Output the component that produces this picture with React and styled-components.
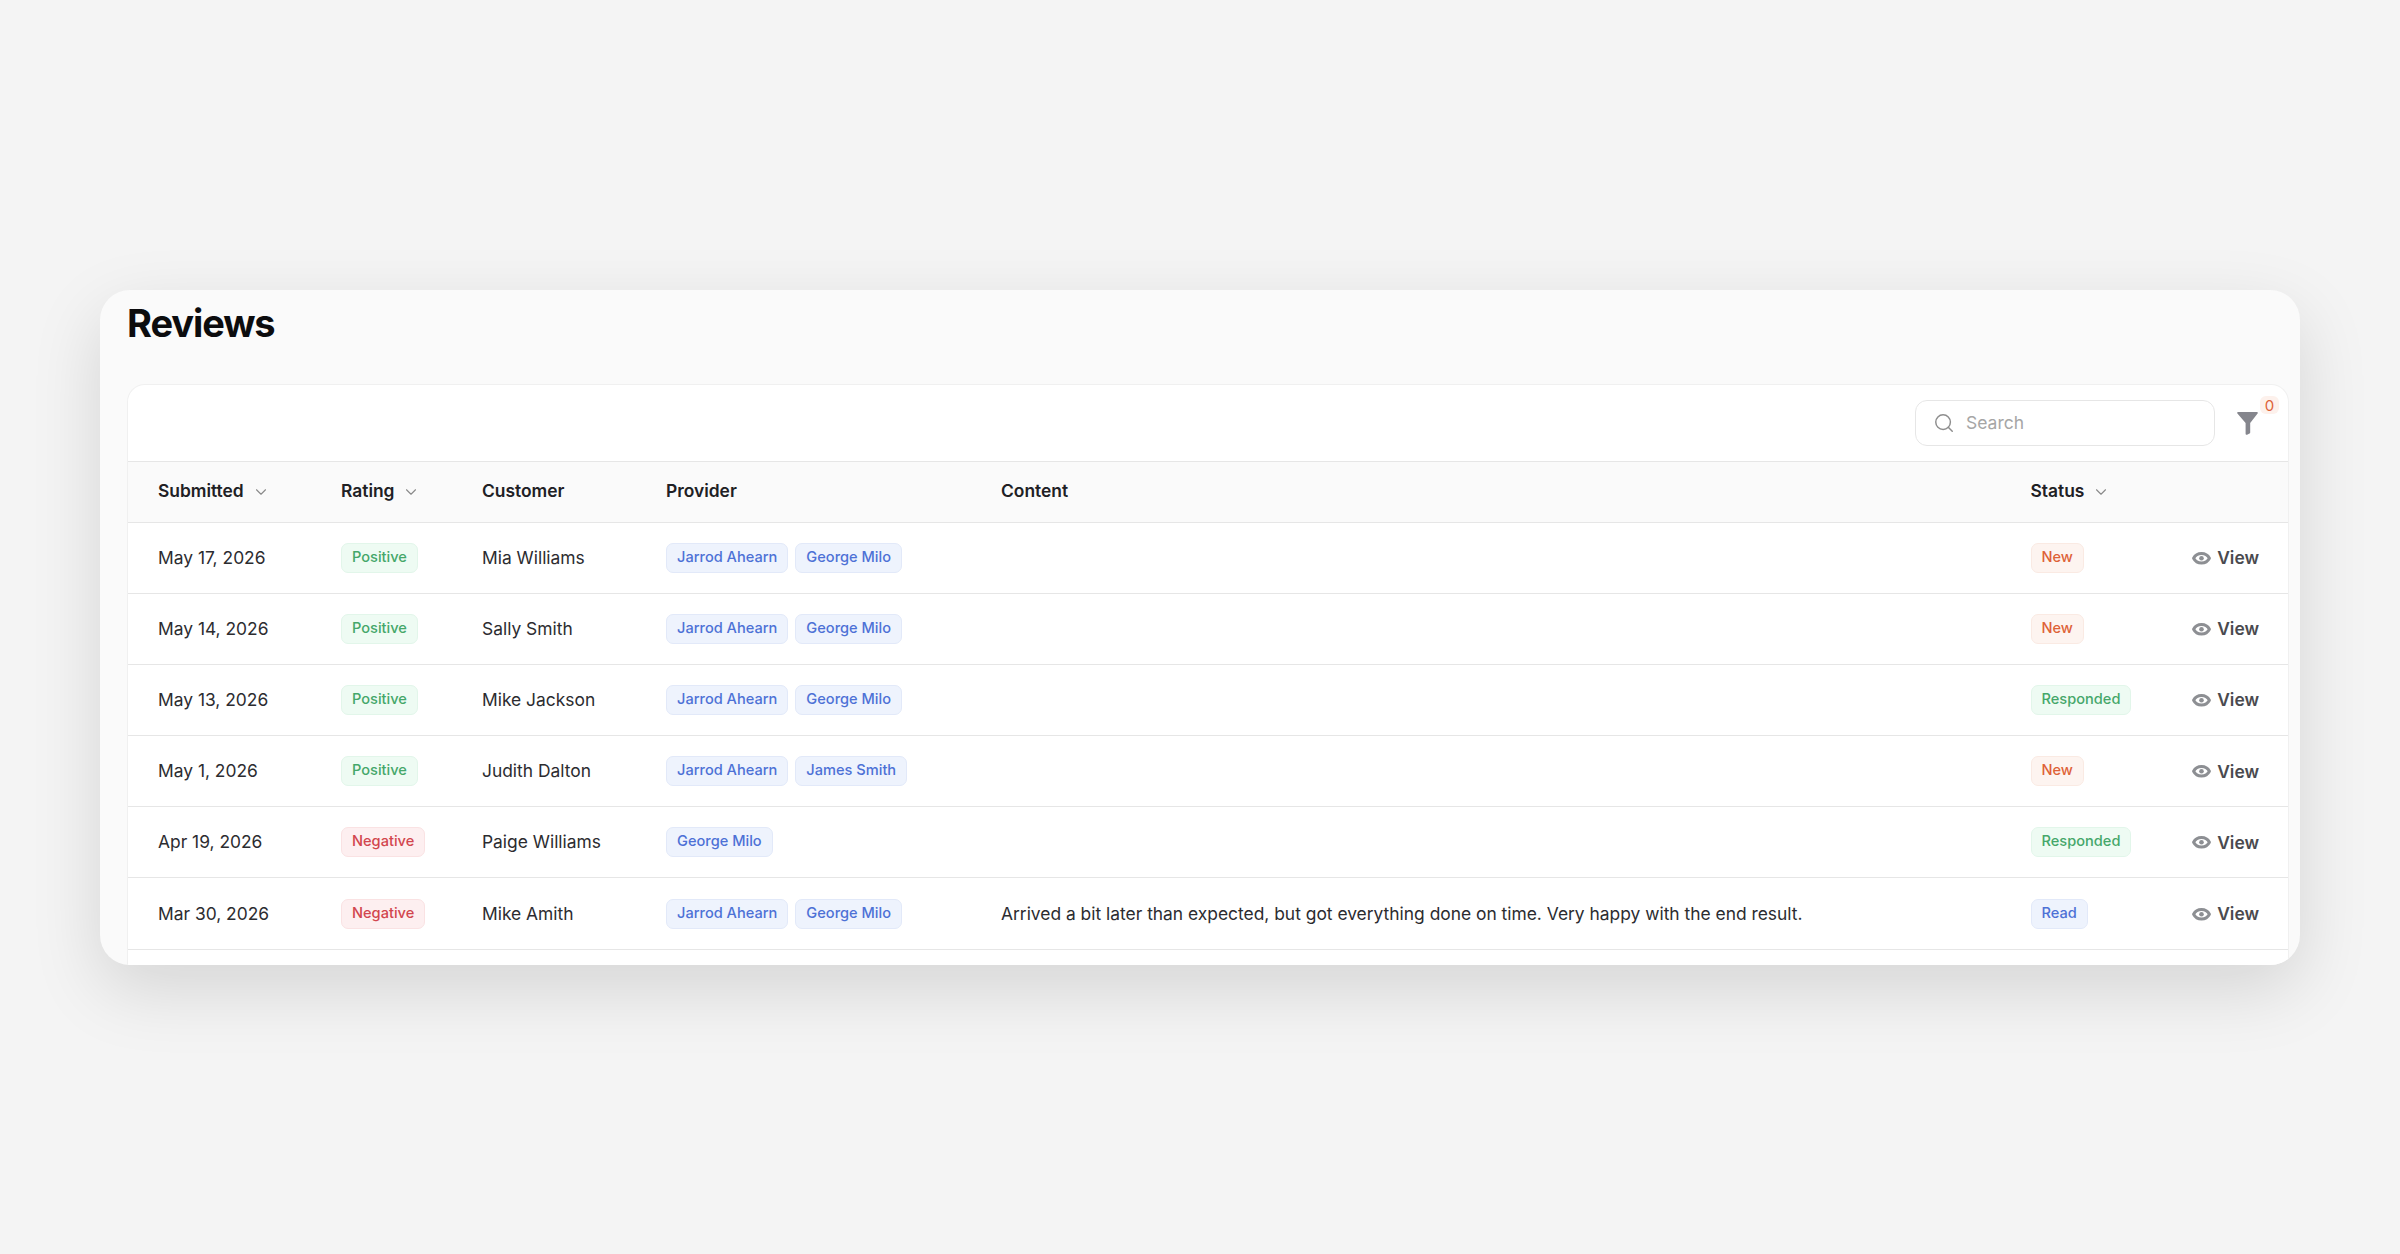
import React from "react";
import styled, { createGlobalStyle } from "styled-components";
import { Search, ChevronDown } from "lucide-react";

const reviews = [
  { date: "May 17, 2026", rating: "Positive", customer: "Mia Williams", providers: ["Jarrod Ahearn", "George Milo"], content: "", status: "New" },
  { date: "May 14, 2026", rating: "Positive", customer: "Sally Smith", providers: ["Jarrod Ahearn", "George Milo"], content: "", status: "New" },
  { date: "May 13, 2026", rating: "Positive", customer: "Mike Jackson", providers: ["Jarrod Ahearn", "George Milo"], content: "", status: "Responded" },
  { date: "May 1, 2026", rating: "Positive", customer: "Judith Dalton", providers: ["Jarrod Ahearn", "James Smith"], content: "", status: "New" },
  { date: "Apr 19, 2026", rating: "Negative", customer: "Paige Williams", providers: ["George Milo"], content: "", status: "Responded" },
  {
    date: "Mar 30, 2026",
    rating: "Negative",
    customer: "Mike Amith",
    providers: ["Jarrod Ahearn", "George Milo"],
    content: "Arrived a bit later than expected, but got everything done on time. Very happy with the end result.",
    status: "Read",
  },
];

const tones = {
  Positive: "green",
  Responded: "green",
  Negative: "red",
  New: "orange",
  Read: "blue",
};

const palette = {
  green: { bg: "#eefbf3", border: "#e2f6ea", text: "#45a76a" },
  red: { bg: "#fdeff0", border: "#fae2e3", text: "#d2464e" },
  orange: { bg: "#fdf4f0", border: "#faeae3", text: "#de6238" },
  blue: { bg: "#eef3fd", border: "#e2e9f9", text: "#4d71d6" },
};

function EyeIcon() {
  return (
    <svg width="19" height="20" viewBox="0 0 19 20" fill="none">
      <path
        d="M1.600 10.300C3.200 7.200 5.900 5.600 9.500 5.600s6.300 1.600 7.900 4.700c-1.600 3.100-4.300 4.700-7.900 4.700s-6.300-1.600-7.900-4.700Z"
        stroke="#8d8f93"
        strokeWidth="3"
        strokeLinejoin="round"
      />
      <circle cx="9.500" cy="10.300" r="2.300" fill="#8d8f93" />
    </svg>
  );
}

function FunnelIcon() {
  return (
    <svg width="21" height="23" viewBox="0 0 21 23">
      <path
        d="M1.200 0h18.600c.8 0 1.300.9.800 1.600L13.200 11v9.400c0 .5-.3.9-.7 1.100l-2.400 1.200c-.7.3-1.500-.2-1.500-1V11L.4 1.600C-.1.900.4 0 1.200 0Z"
        fill="#85868d"
      />
    </svg>
  );
}

export default function App() {
  return (
    <>
      <GlobalStyle />
      <Page>
        <Card>
          <Title>Reviews</Title>
          <TablePanel>
            <Toolbar>
              <SearchBox>
                <Search size={22} color="#8e8e8e" strokeWidth={1.6} />
                <SearchInput placeholder="Search" />
              </SearchBox>
              <FilterButton>
                <FunnelIcon />
                <FilterCount>0</FilterCount>
              </FilterButton>
            </Toolbar>
            <HeadRow>
              <HeadCell>
                Submitted <ChevronDown size={18} color="#8a8a8a" strokeWidth={1.5} />
              </HeadCell>
              <HeadCell>
                Rating <ChevronDown size={18} color="#8a8a8a" strokeWidth={1.5} />
              </HeadCell>
              <HeadCell>Customer</HeadCell>
              <HeadCell>Provider</HeadCell>
              <HeadCell>Content</HeadCell>
              <HeadCell>
                Status <ChevronDown size={18} color="#8a8a8a" strokeWidth={1.5} />
              </HeadCell>
            </HeadRow>
            {reviews.map((review, idx) => (
              <Row key={idx}>
                <Cell>{review.date}</Cell>
                <Cell>
                  <Badge $tone={tones[review.rating]}>{review.rating}</Badge>
                </Cell>
                <Cell>{review.customer}</Cell>
                <ProviderCell>
                  {review.providers.map((name) => (
                    <Badge key={name} $tone="blue">
                      {name}
                    </Badge>
                  ))}
                </ProviderCell>
                <Cell>{review.content}</Cell>
                <StatusCell>
                  <Badge $tone={tones[review.status]}>{review.status}</Badge>
                  <ViewLink>
                    <EyeIcon />
                    View
                  </ViewLink>
                </StatusCell>
              </Row>
            ))}
          </TablePanel>
        </Card>
      </Page>
    </>
  );
}

const GlobalStyle = createGlobalStyle`
  html, body {
    margin: 0;
    padding: 0;
    background: #f4f4f4;
  }
  * {
    box-sizing: border-box;
  }
  body {
    font-family: Inter, "Liberation Sans", sans-serif;
    color: #26262a;
  }
`;

const Page = styled.div`
  min-height: 100vh;
  display: flex;
  align-items: center;
  justify-content: center;
`;

const Card = styled.section`
  width: 2200px;
  height: 675px;
  padding: 0 11px 0 27px;
  background: #fafafa;
  border-radius: 30px;
  overflow: hidden;
  box-shadow: 0 24px 70px rgba(0, 0, 0, 0.13);
`;

const Title = styled.h1`
  height: 94px;
  margin: 0;
  padding-top: 10px;
  font-size: 38px;
  line-height: 46px;
  font-weight: 700;
  letter-spacing: -1.1px;
  color: #0c0c0e;
`;

const TablePanel = styled.div`
  background: #fff;
  border: 1px solid #f0f0f0;
  border-bottom: 0;
  border-radius: 18px 18px 0 0;
  min-height: 590px;
`;

const Toolbar = styled.div`
  height: 76px;
  display: flex;
  align-items: center;
  justify-content: flex-end;
  padding: 0 30px 0 0;
  gap: 22px;
`;

const SearchBox = styled.label`
  width: 300px;
  height: 46px;
  display: flex;
  align-items: center;
  gap: 11px;
  padding: 0 17px;
  background: #fff;
  border: 1px solid #e6e6e6;
  border-radius: 12px;
`;

const SearchInput = styled.input`
  flex: 1;
  min-width: 0;
  border: 0;
  outline: 0;
  padding: 0;
  background: transparent;
  font: 400 17.5px Inter, sans-serif;
  &::placeholder {
    color: #a6a6a6;
    opacity: 1;
  }
`;

const FilterButton = styled.div`
  position: relative;
  display: flex;
  width: 21px;
  height: 23px;
  margin-top: 2px;
`;

const FilterCount = styled.span`
  position: absolute;
  top: -16px;
  left: 23px;
  width: 19px;
  height: 18px;
  display: flex;
  align-items: center;
  justify-content: center;
  border-radius: 6px;
  background: #fdf1ec;
  color: #de6238;
  font-size: 15px;
  line-height: 1;
`;

const columns = "183px 141px 184px 335px 1029.500px 1fr";

const HeadRow = styled.div`
  display: grid;
  grid-template-columns: ${columns};
  align-items: center;
  height: 62px;
  padding: 0 0 3px 30px;
  background: #fafafa;
  border-top: 1px solid #e6e6e6;
  border-bottom: 1px solid #e6e6e6;
`;

const HeadCell = styled.div`
  display: flex;
  align-items: center;
  gap: 8px;
  font-size: 17.4px;
  font-weight: 600;
  color: #202024;
  svg {
    margin-top: 3px;
  }
`;

const Row = styled.div`
  display: grid;
  grid-template-columns: ${columns};
  align-items: center;
  height: 71.2px;
  padding-left: 30px;
  border-bottom: 1px solid #e6e6e6;
`;

const Cell = styled.div`
  font-size: 17.4px;
  line-height: 24px;
  white-space: nowrap;
  color: #2c2c30;
`;

const ProviderCell = styled.div`
  display: flex;
  gap: 7px;
`;

const StatusCell = styled.div`
  display: flex;
  align-items: center;
  justify-content: space-between;
  padding-right: 29px;
`;

const Badge = styled.span`
  display: inline-flex;
  align-items: center;
  height: 30px;
  padding: 0 10px 2px;
  border-radius: 7px;
  font-size: 14.6px;
  font-weight: 500;
  white-space: nowrap;
  background: ${(p) => palette[p.$tone].bg};
  border: 1px solid ${(p) => palette[p.$tone].border};
  color: ${(p) => palette[p.$tone].text};
`;

const ViewLink = styled.span`
  display: inline-flex;
  align-items: center;
  gap: 6px;
  font-size: 17.4px;
  font-weight: 600;
  color: #4a4a4f;
`;
